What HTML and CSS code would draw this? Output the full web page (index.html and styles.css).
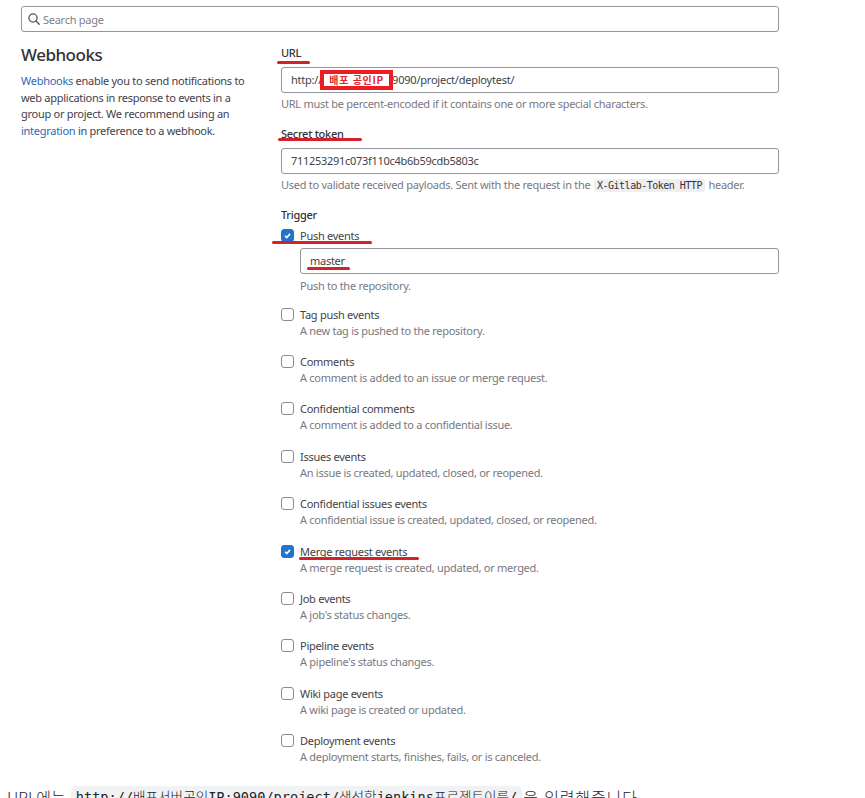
FILE: index.html
```html
<!DOCTYPE html>
<html lang="ko">
<head>
<meta charset="utf-8">
<title>Webhooks</title>
<link rel="stylesheet" href="styles.css">
</head>
<body>
<main class="settings">
  <div class="search">
    <svg class="search-icon" viewBox="0 0 12 12"><circle cx="5" cy="5" r="4.1"/><path d="M8 8l3.2 3.2"/></svg>
    <span class="t-search">Search page</span>
  </div>
  <div class="columns">
    <aside class="intro">
      <h1>Webhooks</h1>
      <p><a>Webhooks</a> enable you to send notifications to<br>web applications in response to events in a<br>group or project. We recommend using an<br><a>integration</a> in preference to a webhook.</p>
    </aside>
    <form class="form">
      <div class="label"><span class="mark m-url">URL</span></div>
      <div class="input url"><span>http://</span><span class="redact">배포 공인IP</span><span class="rest">9090/project/deploytest/</span></div>
      <div class="help">URL must be percent-encoded if it contains one or more special characters.</div>
      <div class="label secret"><span class="mark m-secret">Secret token</span></div>
      <div class="input token">711253291c073f110c4b6b59cdb5803c</div>
      <div class="help">Used to validate received payloads. Sent with the request in the <code>X-Gitlab-Token HTTP</code> header.</div>
      <div class="label trigger">Trigger</div>
      <div class="event push"><i class="box on"><svg viewBox="0 0 13 13"><path d="M4 6.7l1.8 1.8 3.2-3.6"/></svg></i><div class="body"><div class="name"><span class="mark m-push">Push events</span></div><div class="input branch"><span class="mark m-master">master</span></div><div class="desc">Push to the repository.</div></div></div>
      <div class="event"><i class="box"></i><div class="body"><div class="name">Tag push events</div><div class="desc">A new tag is pushed to the repository.</div></div></div>
      <div class="event"><i class="box"></i><div class="body"><div class="name">Comments</div><div class="desc">A comment is added to an issue or merge request.</div></div></div>
      <div class="event"><i class="box"></i><div class="body"><div class="name">Confidential comments</div><div class="desc">A comment is added to a confidential issue.</div></div></div>
      <div class="event"><i class="box"></i><div class="body"><div class="name">Issues events</div><div class="desc">An issue is created, updated, closed, or reopened.</div></div></div>
      <div class="event"><i class="box"></i><div class="body"><div class="name">Confidential issues events</div><div class="desc">A confidential issue is created, updated, closed, or reopened.</div></div></div>
      <div class="event"><i class="box on"><svg viewBox="0 0 13 13"><path d="M4 6.7l1.8 1.8 3.2-3.6"/></svg></i><div class="body"><div class="name"><span class="mark m-merge">Merge request events</span></div><div class="desc">A merge request is created, updated, or merged.</div></div></div>
      <div class="event"><i class="box"></i><div class="body"><div class="name">Job events</div><div class="desc">A job's status changes.</div></div></div>
      <div class="event"><i class="box"></i><div class="body"><div class="name">Pipeline events</div><div class="desc">A pipeline's status changes.</div></div></div>
      <div class="event"><i class="box"></i><div class="body"><div class="name">Wiki page events</div><div class="desc">A wiki page is created or updated.</div></div></div>
      <div class="event"><i class="box"></i><div class="body"><div class="name">Deployment events</div><div class="desc">A deployment starts, finishes, fails, or is canceled.</div></div></div>
    </form>
  </div>
</main>
<p class="caption"><span class="c1">URL에는</span><code>http://배포서버공인IP:9090/project/생성할jenkins프로젝트이름/</code><span class="c2">을 입력해줍니다.</span></p>
</body>
</html>
```
FILE: styles.css
```css
* { box-sizing: border-box; }
html, body { height: 798px; overflow: hidden; }
body { margin: 0; background: #fff; color: #434247; font: 11px/16px "Noto Sans", "Noto Sans CJK KR", sans-serif; letter-spacing: -.275px; }
.settings { height: 763px; padding: 6px 0 0 21px; overflow: hidden; white-space: nowrap; }
.search { width: 758px; height: 26px; border: 1px solid #95959a; border-radius: 3px; display: flex; align-items: center; padding-left: 6px; gap: 3px; color: #808086; }
.t-search { padding-top: 1px; }
.search-icon { width: 12px; height: 12px; fill: none; stroke: #55555c; stroke-width: 1.3; stroke-linecap: round; }
.columns { display: flex; }
.intro { width: 260px; }
h1 { margin: 12px 0 0; font-size: 17px; line-height: 22px; font-weight: 500; letter-spacing: -.5px; color: #333238; }
.intro p { margin: 7px 0 0; line-height: 16.5px; }
a { color: #2f68b4; }
.form { width: 498px; padding-top: 13px; }
.label { font-weight: 500; height: 16px; color: #333238; }
.input { height: 26px; border: 1px solid #95959a; border-radius: 3px; padding: 0 9px; display: flex; align-items: center; margin-top: 6px; }
.url { letter-spacing: -.22px; }
.token { letter-spacing: -.29px; }
.help { color: #79787e; margin-top: 3px; height: 16px; }
.secret { margin-top: 14px; }
.trigger { margin-top: 14px; }
.help code { font: 10px/14px "DejaVu Sans Mono", monospace; letter-spacing: -.5px; background: #efeff0; color: #333238; border-radius: 3px; padding: 1px 3px; margin: 0 1px; }
.redact { border: 4px solid #ec1c24; background: #fff; color: #e3262d; width: 73px; height: 20px; margin-left: -2px; font: 700 10px/12px "Noto Sans CJK KR", sans-serif; letter-spacing: .7px; text-align: center; }
.rest { margin-left: -1px; }
.event { display: flex; height: 47.42px; }
.push { height: 78.6px; margin-top: 5px; }
.box { width: 13px; height: 13px; margin: 1px 6px 0 0; border: 1px solid #8b8b91; border-radius: 3px; flex: none; }
.on { background: #1f75cb; border-color: #1f75cb; }
.on svg { display: block; width: 13px; height: 13px; margin: -1px; fill: none; stroke: #fff; stroke-width: 1.6; }
.body { flex: 1; }
.desc { color: #79787e; }
.branch { margin: 4px 0; }
.mark { position: relative; }
.mark::after { content: ""; position: absolute; height: 3px; border-radius: 2px; background: #d3222a; }
.m-url::after { left: -4px; top: 16px; width: 33px; }
.m-secret::after { left: -3px; top: 12px; width: 84px; }
.m-push::after { left: -28px; top: 13px; width: 100px; }
.m-master::after { left: -3px; top: 14px; width: 43px; }
.m-merge::after { left: -1px; top: 13px; width: 120px; }
.caption { margin: 22px 0 0 7px; display: flex; white-space: nowrap; font: 300 16px/24px "Noto Sans CJK KR", sans-serif; letter-spacing: 0; color: #212529; }
.caption code { font: 300 13.6px/22px "DejaVu Sans Mono", "Noto Sans CJK KR", monospace; background: #f1f2f4; border-radius: 6px; padding: 0 5px; margin: 1px 1px 0 5px; }
.c2 { letter-spacing: .9px; }
```
